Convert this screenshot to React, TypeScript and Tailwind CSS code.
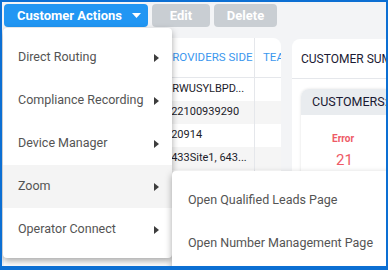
import React from 'react';

const menuItems = ['Direct Routing', 'Compliance Recording', 'Device Manager', 'Zoom', 'Operator Connect'];
const subItems = ['Open Qualified Leads Page', 'Open Number Management Page'];
const rows = ['DRWUSYLBPD...', '122100939290', '720914', '6433Site1, 643...', ''];

function Arrow() {
  return (
    <svg width="5" height="8" viewBox="0 0 5 8" className="shrink-0">
      <path d="M0 0 L5 4 L0 8 Z" fill="#3d3d3d" />
    </svg>
  );
}

export default function App() {
  return (
    <div
      className="relative w-[388px] h-[270px] overflow-hidden border-2 border-b-4 border-[#0c6fd3] bg-[#f3f4f6]"
      style={{ fontFamily: 'Roboto, "Liberation Sans", sans-serif' }}
    >
      {/* toolbar */}
      <div className="flex gap-[4px] pl-[2px] pt-[2px] h-[25px]">
        <div className="flex items-center w-[144px] rounded-[4px] bg-[#2196f3] pl-[13px] text-white text-[13px] font-bold">
          Customer Actions
          <svg width="9" height="5" viewBox="0 0 9 5" className="ml-[10px]">
            <path d="M0 0 L9 0 L4.5 5 Z" fill="#ffffff" />
          </svg>
        </div>
        <div className="flex items-center justify-center w-[58px] rounded-[4px] bg-[#c9ced3] text-white text-[13px] font-bold">
          Edit
        </div>
        <div className="flex items-center justify-center w-[63px] rounded-[4px] bg-[#c9ced3] text-white text-[13px] font-bold">
          Delete
        </div>
      </div>

      {/* background content */}
      <div className="flex mt-[11px] pl-[2px] h-[240px]">
        <div className="w-[277px] shrink-0 rounded-t-lg bg-white overflow-hidden">
          <div className="grid grid-cols-[29px_127px_95px_80px] h-[40px] border-b border-[#e5e7eb] text-[11.5px] text-[#3b97ee]">
            <div className="border-r border-[#e5e7eb]" />
            <div className="border-r border-[#e5e7eb]" />
            <div className="flex items-center pl-[5px] border-r border-[#e5e7eb] whitespace-nowrap">PROVIDERS SIDE</div>
            <div className="flex items-center pl-[8px] whitespace-nowrap">TEAMS</div>
          </div>
          {rows.map((r, i) => (
            <div
              key={i}
              className={`grid grid-cols-[29px_127px_95px_80px] h-[23px] text-[11px] text-[#1c1c2a] ${i % 2 === 1 ? 'bg-[#f5f5f5]' : 'bg-white'}`}
            >
              <div className="border-r border-[#e5e7eb]" />
              <div className="border-r border-[#e5e7eb]" />
              <div className="flex items-center pl-[5px] border-r border-[#e5e7eb] whitespace-nowrap overflow-hidden">{r}</div>
              <div />
            </div>
          ))}
        </div>

        <div className="flex-1 min-w-0 overflow-hidden ml-[11px] mt-[1px] rounded-tl-lg bg-white">
          <div className="flex items-center h-[40px] pl-[9px] border-b border-[#e5e7eb] text-[12px] text-[#1a1a33] whitespace-nowrap">
            CUSTOMER SUMMARY
          </div>
          <div className="ml-[9px] mt-[10px] rounded-tl-lg bg-white shadow-[0_0_3px_rgba(0,0,0,0.12)] h-[150px]">
            <div className="flex items-center h-[26px] pl-[11px] rounded-tl-lg bg-[#e9ecef] text-[12.5px] text-[#1a1a33] whitespace-nowrap">
              CUSTOMERS: 45
            </div>
            <div className="flex flex-col items-start pl-[31px] pt-[16px]">
              <div className="text-[10px] font-bold text-[#ee5a66]">Error</div>
              <div className="ml-[4px] mt-[3px] text-[15px] text-[#ee5a66]">21</div>
            </div>
          </div>
        </div>
      </div>

      {/* dropdown menu */}
      <div className="absolute left-[1px] top-[26px] w-[169px] rounded-[4px] bg-white pt-[8px] pb-[7px] shadow-[0_3px_7px_rgba(0,0,0,0.35)]">
        {menuItems.map((m) => (
          <div
            key={m}
            className={`flex items-center justify-between h-[43px] pl-[15px] pr-[13px] text-[12.5px] text-[#545454] ${m === 'Zoom' ? 'bg-[#f4f4f4]' : ''}`}
          >
            <span>{m}</span>
            <Arrow />
          </div>
        ))}
      </div>

      {/* submenu */}
      <div className="absolute left-[170px] top-[169px] w-[230px] h-[110px] rounded-[4px] bg-white pt-[8px] shadow-[0_3px_7px_rgba(0,0,0,0.35)]">
        {subItems.map((s) => (
          <div key={s} className="flex items-center h-[43px] pl-[16px] text-[12.5px] text-[#545454] whitespace-nowrap">
            {s}
          </div>
        ))}
      </div>
    </div>
  );
}
